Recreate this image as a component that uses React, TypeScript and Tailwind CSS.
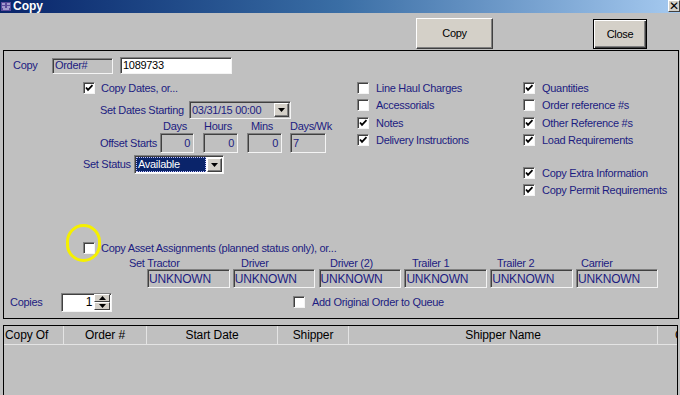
import React from 'react';

const navy = 'text-[#1c1c80]';

function Tick() {
  return (
    <svg width="9" height="8" viewBox="0 0 9 8" className="block">
      <polyline points="1,3.5 3,5.8 7.5,1.2" fill="none" stroke="#000" strokeWidth="1.8" />
    </svg>
  );
}

function Box({ checked }: { checked?: boolean }) {
  return (
    <span className="inline-flex h-[12px] w-[12px] shrink-0 items-center justify-center border border-t-[#808080] border-l-[#808080] border-b-[#f4f4f4] border-r-[#f4f4f4] bg-white shadow-[inset_1px_1px_0_#404040]">
      {checked && <Tick />}
    </span>
  );
}

function Opt({ label, checked }: { label: string; checked?: boolean }) {
  return (
    <div className="flex h-[17.4px] items-start">
      <Box checked={checked} />
      <span className={`ml-[7px] leading-[12px] ${navy}`}>{label}</span>
    </div>
  );
}

function Arrow({ up }: { up?: boolean }) {
  return (
    <svg width="7" height="4" viewBox="0 0 7 4" className="block">
      <polygon points={up ? '0,4 7,4 3.5,0' : '0,0 7,0 3.5,4'} fill="#000" />
    </svg>
  );
}

function DropBtn() {
  return (
    <span className="flex h-[14px] w-[15px] items-center justify-center border border-t-white border-l-white border-b-[#404040] border-r-[#404040] bg-[#d4d0c8] shadow-[inset_-1px_-1px_0_#808080]">
      <Arrow />
    </span>
  );
}

function Sunken({ className, children }: { className?: string; children?: React.ReactNode }) {
  return (
    <div
      className={`flex items-center border border-t-[#808080] border-l-[#808080] border-b-[#f4f4f4] border-r-[#f4f4f4] shadow-[inset_1px_1px_0_#404040] ${className ?? ''}`}
    >
      {children}
    </div>
  );
}

export default function App() {
  return (
    <div className="h-[395px] w-[680px] overflow-hidden bg-[#c0c0c0] text-[11px] tracking-[-0.3px] font-['Liberation_Sans',Arial,sans-serif]">
      {/* title bar */}
      <div className="flex h-[13px] items-center overflow-hidden bg-gradient-to-r from-[#0a246a] via-[#3a6ea5] to-[#a6caf0]">
        <svg width="10" height="9" viewBox="0 0 10 9" className="ml-[1px]">
          <rect x="0" y="0" width="10" height="9" fill="#5a4a9a" />
          <path d="M1 2h3M1 5h3M6 2h3M6 5h3M2 7h6" stroke="#e8e8ff" strokeWidth="1" />
        </svg>
        <span className="ml-[2px] text-[12px] leading-[13px] font-bold tracking-normal text-white">Copy</span>
        <span className="ml-auto flex h-[12px] w-[12px] self-start items-center justify-center border border-[#404040] border-t-white border-l-white bg-[#d4d0c8] text-[12px] leading-none text-black">
          ✕
        </span>
      </div>

      {/* buttons */}
      <div className="flex h-[37px] justify-end gap-[100px] pr-[33px] pt-[5px]">
        <button className="h-[31px] w-[77px] border border-t-white border-l-white border-b-[#404040] border-r-[#404040] bg-[#d4d0c8] text-black shadow-[inset_-1px_-1px_0_#808080]">
          Copy
        </button>
        <button className="mt-[1px] h-[30px] w-[54px] border border-black bg-[#d4d0c8] text-black shadow-[inset_1px_1px_0_#fff,inset_-1px_-1px_0_#404040,inset_-2px_-2px_0_#808080]">
          Close
        </button>
      </div>

      {/* main frame */}
      <div className="ml-[3px] h-[269px] w-[676px] border border-black">
        <div className="mt-[6px] flex h-[17px] items-center pl-[9px]">
          <span className={`w-[39px] ${navy}`}>Copy</span>
          <Sunken className="h-[16px] w-[61px] pl-[2px]">
            <span className={navy}>Order#</span>
          </Sunken>
          <Sunken className="ml-[7px] h-[17px] w-[112px] bg-white pl-[2px]">
            <span className="text-black">1089733</span>
          </Sunken>
        </div>

        <div className="mt-[8px] flex h-[160px]">
          {/* left column */}
          <div className="w-[353px] pl-[79px]">
            <div className="flex h-[12px] items-center">
              <Box checked />
              <span className={`ml-[6px] ${navy}`}>Copy Dates, or...</span>
            </div>
            <div className="mt-[7px] flex h-[18px] items-center pl-[17px]">
              <span className={`w-[89px] ${navy}`}>Set Dates Starting</span>
              <Sunken className="h-[18px] w-[102px] justify-between pl-[2px] pr-[1px]">
                <span className={navy}>03/31/15 00:00</span>
                <DropBtn />
              </Sunken>
            </div>
            <div className={`flex h-[14px] items-end pl-[80px] leading-[13px] ${navy}`}>
              <span className="w-[41px]">Days</span>
              <span className="w-[47px]">Hours</span>
              <span className="w-[39px]">Mins</span>
              <span>Days/Wk</span>
            </div>
            <div className="flex h-[20px] items-center pl-[17px]">
              <span className={`w-[60px] ${navy}`}>Offset Starts</span>
              <Sunken className="h-[20px] w-[34px] justify-end pr-[3px]">
                <span className={navy}>0</span>
              </Sunken>
              <Sunken className="ml-[9px] h-[20px] w-[35px] justify-end pr-[3px]">
                <span className={navy}>0</span>
              </Sunken>
              <Sunken className="ml-[9px] h-[20px] w-[35px] justify-end pr-[3px]">
                <span className={navy}>0</span>
              </Sunken>
              <Sunken className="ml-[8px] h-[20px] w-[36px] pl-[2px]">
                <span className={navy}>7</span>
              </Sunken>
            </div>
            <div className="mt-[2px] flex h-[19px] items-center">
              <span className={`w-[51px] ${navy}`}>Set Status</span>
              <Sunken className="h-[19px] w-[90px] justify-between bg-white pl-[1px] pr-[1px]">
                <span className="h-[15px] w-[70px] border border-dotted border-[#c0c0ff] bg-[#0a246a] pl-[1px] leading-[13px] text-white">
                  Available
                </span>
                <DropBtn />
              </Sunken>
            </div>
          </div>

          {/* check column 1 */}
          <div className="w-[166px]">
            <Opt label="Line Haul Charges" />
            <Opt label="Accessorials" />
            <Opt label="Notes" checked />
            <Opt label="Delivery Instructions" checked />
          </div>

          {/* check column 2 */}
          <div>
            <Opt label="Quantities" checked />
            <Opt label="Order reference #s" />
            <Opt label="Other Reference #s" checked />
            <Opt label="Load Requirements" checked />
            <div className="h-[15px]" />
            <Opt label="Copy Extra Information" checked />
            <Opt label="Copy Permit Requirements" checked />
          </div>
        </div>

        {/* asset assignments */}
        <div className="flex h-[14px] items-start pl-[79px]">
          <div className="relative">
            <Box />
            <span className="pointer-events-none absolute left-[-17px] top-[-18px] h-[38px] w-[35px] rounded-full border-[3px] border-[#f5f000]" />
          </div>
          <span className={`ml-[6px] leading-[12px] ${navy}`}>Copy Asset Assignments (planned status only), or...</span>
        </div>
        <div className={`flex h-[13px] items-end pl-[125px] leading-[12px] ${navy}`}>
          <span className="w-[112px]">Set Tractor</span>
          <span className="w-[89px]">Driver</span>
          <span className="w-[82px]">Driver (2)</span>
          <span className="w-[85px]">Trailer 1</span>
          <span className="w-[84px]">Trailer 2</span>
          <span>Carrier</span>
        </div>
        <div className="flex h-[19px] gap-[3.3px] pl-[143px]">
          {['t', 'd', 'd2', 't1', 't2', 'c'].map((k) => (
            <Sunken key={k} className="h-[19px] w-[82.5px] pl-[1px]">
              <span className={`text-[12px] tracking-[-0.2px] ${navy}`}>UNKNOWN</span>
            </Sunken>
          ))}
        </div>
        <div className="mt-[5px] flex h-[18px] items-center pl-[6px]">
          <span className={`w-[51px] ${navy}`}>Copies</span>
          <Sunken className="h-[19px] w-[51px] justify-between bg-white pr-[1px]">
            <span className="flex-1 pr-[2px] text-right text-[12px] text-black">1</span>
            <div className="flex flex-col">
              <span className="flex h-[8px] w-[16px] items-center justify-center border border-t-white border-l-white border-b-[#404040] border-r-[#404040] bg-[#d4d0c8]">
                <Arrow up />
              </span>
              <span className="flex h-[8px] w-[16px] items-center justify-center border border-t-white border-l-white border-b-[#404040] border-r-[#404040] bg-[#d4d0c8]">
                <Arrow />
              </span>
            </div>
          </Sunken>
          <div className="ml-[181px] flex items-center">
            <Box />
            <span className={`ml-[7px] ${navy}`}>Add Original Order to Queue</span>
          </div>
        </div>
      </div>

      {/* list */}
      <div className="ml-[3px] mt-[6px] h-[70px] w-[675px] overflow-hidden border border-b-0 border-black">
        <div className="flex h-[19px] items-center border-b border-[#e4e4e4] text-[12px] tracking-[-0.1px] text-black">
          <span className="w-[60px] shrink-0 border-r border-[#e4e4e4] pl-[1px] leading-[18px]">Copy Of</span>
          <span className="w-[83px] shrink-0 border-r border-[#e4e4e4] text-center leading-[18px]">Order #</span>
          <span className="w-[131px] shrink-0 border-r border-[#e4e4e4] text-center leading-[18px]">Start Date</span>
          <span className="w-[71px] shrink-0 border-r border-[#e4e4e4] text-center leading-[18px]">Shipper</span>
          <span className="w-[309px] shrink-0 border-r border-[#e4e4e4] text-center leading-[18px]">Shipper Name</span>
          <span className="shrink-0 whitespace-nowrap pl-[17px] leading-[18px]">Consignee</span>
        </div>
      </div>
    </div>
  );
}
